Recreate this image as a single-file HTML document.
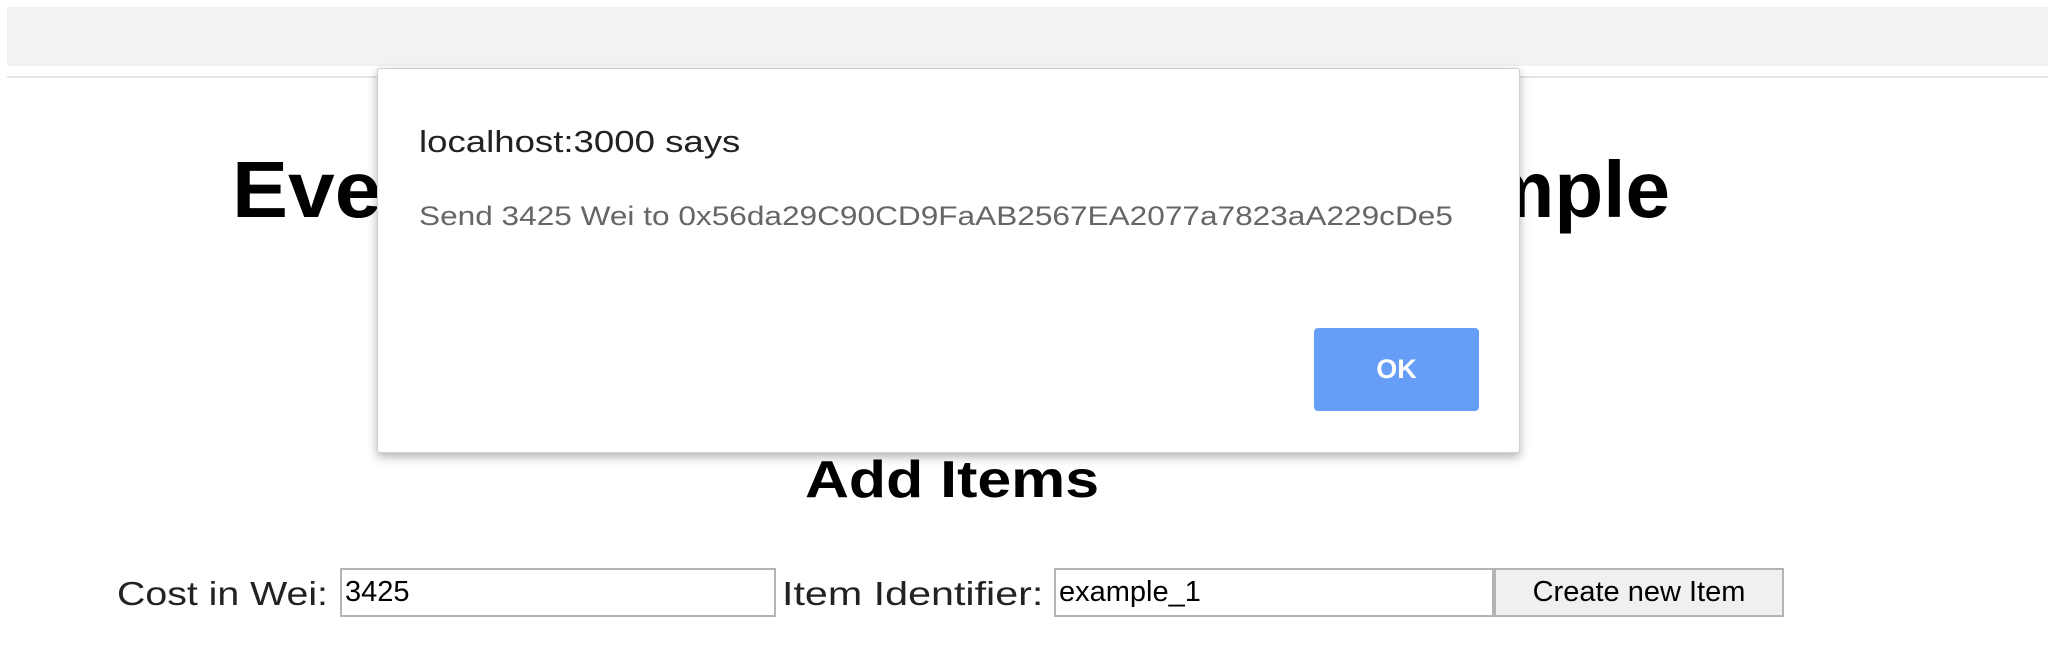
<!DOCTYPE html>
<html><head><style>
html,body{margin:0;padding:0;width:2058px;height:658px;overflow:hidden;background:#fff;font-family:"Liberation Sans","DejaVu Sans",sans-serif;}
.a{position:absolute;white-space:nowrap;}
.s{transform-origin:0 50%;}
</style></head><body>
<div class="a" style="left:7px;top:7px;width:2041px;height:59px;background:#f1f2f4;"></div>
<div class="a" style="left:7px;top:76px;width:2041px;height:2px;background:#e3e4e6;"></div>

<div class="a s" style="left:232px;top:140px;font-size:80px;font-weight:bold;color:#000;line-height:100px;transform:scaleX(1.05);">Ever</div>
<div class="a" style="left:1480px;top:140px;width:190px;text-align:right;font-size:80px;font-weight:bold;color:#000;line-height:100px;">mple</div>

<div class="a s" style="left:805px;top:447px;font-size:52px;font-weight:bold;color:#000;line-height:66px;transform:scaleX(1.17);">Add Items</div>

<div class="a s" style="left:117px;top:572px;font-size:33px;color:#222;line-height:44px;transform:scaleX(1.19);">Cost in Wei:</div>
<div class="a" style="left:340px;top:568px;width:436px;height:49px;border:2px solid #b4b4b4;box-sizing:border-box;font-size:29px;line-height:45px;padding-left:3px;color:#000;">3425</div>
<div class="a s" style="left:782px;top:572px;font-size:33px;color:#222;line-height:44px;transform:scaleX(1.25);">Item Identifier:</div>
<div class="a" style="left:1054px;top:568px;width:440px;height:49px;border:2px solid #b4b4b4;box-sizing:border-box;font-size:29px;line-height:45px;padding-left:3px;color:#000;">example_1</div>
<div class="a" style="left:1494px;top:568px;width:290px;height:49px;border:2px solid #b4b4b4;box-sizing:border-box;background:#f0f0f0;font-size:29px;line-height:45px;text-align:center;color:#000;">Create new Item</div>

<div class="a" style="left:377px;top:68px;width:1143px;height:385px;background:#fff;border:1px solid #cfcfcf;box-sizing:border-box;border-radius:3px;box-shadow:0 4px 10px rgba(0,0,0,0.3);"></div>
<div class="a s" style="left:419px;top:120px;font-size:31px;color:#222;line-height:44px;transform:scaleX(1.18);">localhost:3000 says</div>
<div class="a s" style="left:419px;top:198px;font-size:27px;color:#666;line-height:36px;transform:scaleX(1.17);">Send 3425 Wei to 0x56da29C90CD9FaAB2567EA2077a7823aA229cDe5</div>
<div class="a" style="left:1314px;top:328px;width:165px;height:83px;background:#669df6;border-radius:4px;color:#fff;font-weight:bold;font-size:27px;line-height:83px;text-align:center;">OK</div>
</body></html>
